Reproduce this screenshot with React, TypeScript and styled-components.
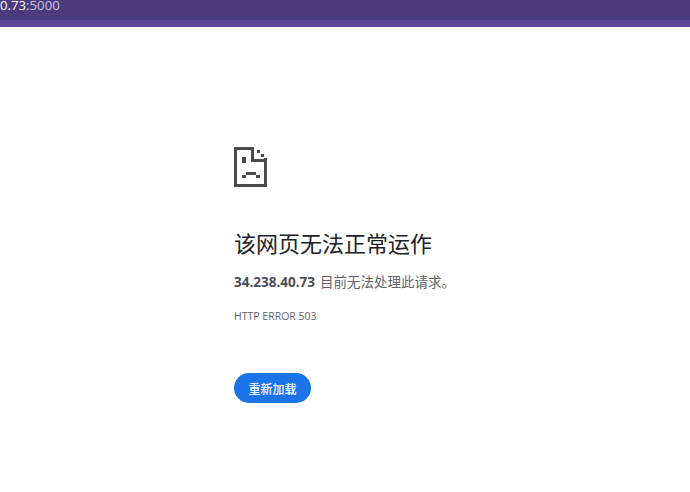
import React from 'react';
import styled, { createGlobalStyle } from 'styled-components';

const Global = createGlobalStyle`
  html, body {
    margin: 0;
    padding: 0;
    background: #ffffff;
  }
  body {
    font-family: "Open Sans", "Noto Sans CJK SC", sans-serif;
    overflow: hidden;
  }
`;

const Page = styled('div')`
  width: 690px;
  height: 492px;
  display: flex;
  flex-direction: column;
`;

const AddressBar = styled('div')`
  height: 20px;
  background: #4b3a7c;
  font-size: 13.2px;
  line-height: 11px;
  color: #c9c3dd;
  white-space: nowrap;
  overflow: hidden;
`;

const Host = styled('span')`
  color: #ffffff;
`;

const AccentStrip = styled('div')`
  height: 7px;
  background: #60459f;
`;

const Content = styled('main')`
  padding: 120px 0 0 234px;
  display: flex;
  flex-direction: column;
  align-items: flex-start;
`;

const Title = styled('h1')`
  margin: 40px 0 0;
  font-family: "Noto Sans CJK SC", sans-serif;
  font-weight: 400;
  font-size: 22px;
  line-height: 30px;
  color: #202124;
`;

const Message = styled('p')`
  margin: 14px 0 0;
  font-family: "Noto Sans CJK SC", sans-serif;
  font-size: 13.5px;
  line-height: 20px;
  color: #5f6368;
`;

const Address = styled('strong')`
  margin-right: 2px;
  font-family: "Open Sans", sans-serif;
  font-weight: 700;
  color: #4a4d52;
`;

const ErrorCode = styled('p')`
  margin: 16px 0 0;
  font-size: 10.5px;
  line-height: 16px;
  color: #5f6368;
`;

const ReloadButton = styled('button')`
  margin-top: 49px;
  width: 77px;
  height: 30px;
  padding: 0;
  border: none;
  border-radius: 15px;
  background: #1a73e8;
  color: #ffffff;
  font-family: "Noto Sans CJK SC", sans-serif;
  font-size: 12px;
  font-weight: 500;
`;

const SadPage = () => (
  <svg width="33" height="40" viewBox="0 0 33 40" shapeRendering="crispEdges" fill="#4a4a4a">
    <rect x="0" y="0" width="3" height="40" />
    <rect x="0" y="0" width="20" height="3" />
    <rect x="0" y="37" width="33" height="3" />
    <rect x="30" y="11" width="3" height="29" />
    <rect x="17" y="0" width="3" height="15" />
    <rect x="17" y="12" width="16" height="3" />
    <rect x="23" y="3" width="3" height="3" />
    <rect x="27" y="7" width="3" height="3" />
    <rect x="8" y="10" width="4" height="6" />
    <rect x="12" y="25" width="10" height="3" />
    <rect x="8" y="28" width="4" height="3" />
    <rect x="22" y="28" width="4" height="3" />
  </svg>
);

export default function App() {
  return (
    <Page>
      <Global />
      <AddressBar>
        <Host>0.73</Host>:5000
      </AddressBar>
      <AccentStrip />
      <Content>
        <SadPage />
        <Title>该网页无法正常运作</Title>
        <Message>
          <Address>34.238.40.73</Address> 目前无法处理此请求。
        </Message>
        <ErrorCode>HTTP ERROR 503</ErrorCode>
        <ReloadButton>重新加载</ReloadButton>
      </Content>
    </Page>
  );
}
